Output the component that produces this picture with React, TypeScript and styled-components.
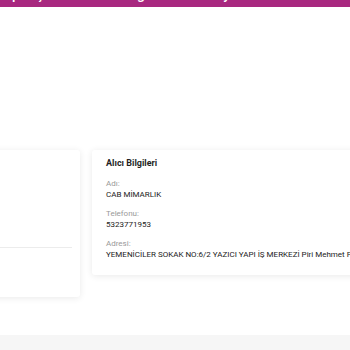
import styled, { createGlobalStyle } from 'styled-components';

const GlobalStyle = createGlobalStyle`
    html, body {
        margin: 0;
        padding: 0;
        background: #ffffff;
        font-family: Roboto, 'Noto Sans', Arial, sans-serif;
    }
`;

const Page = styled.div`
    width: 350px;
    height: 350px;
    overflow: hidden;
    display: flex;
    flex-direction: column;
`;

const TopBar = styled.div`
    height: 7px;
    flex: none;
    background-color: #a8287f;
    overflow: hidden;
    display: flex;
    align-items: flex-end;
`;

const Tab = styled.div<{ width: number }>`
    flex: none;
    width: ${(p) => p.width}px;
    text-align: right;
    color: #ffffff;
    font-size: 14px;
    font-weight: 500;
    line-height: 14px;
    margin-bottom: 6px;
    white-space: nowrap;
`;

const Content = styled.div`
    flex: 1;
    display: flex;
    flex-direction: column;
    padding-top: 143px;
`;

const CardRow = styled.div`
    display: flex;
    align-items: flex-start;
    gap: 12px;
    margin-left: -200px;
`;

const Card = styled.div<{ width: number; height: number }>`
    flex: none;
    width: ${(p) => p.width}px;
    height: ${(p) => p.height}px;
    background: #ffffff;
    border-radius: 3px;
    box-shadow: 0 1px 7px rgba(0, 0, 0, 0.09);
    box-sizing: border-box;
`;

const SideCard = styled(Card)`
    display: flex;
    flex-direction: column;
    padding: 0 8px 0 14px;
`;

const Divider = styled.div`
    margin-top: 97px;
    height: 1px;
    background: #ececec;
`;

const InfoCard = styled(Card)`
    padding: 7px 14px 0 14px;
    display: flex;
    flex-direction: column;
    white-space: nowrap;
    overflow: hidden;
`;

const Title = styled.div`
    font-size: 9px;
    font-weight: 700;
    color: #1f1f1f;
    line-height: 12px;
    margin-bottom: 9px;
`;

const Field = styled.div`
    display: flex;
    flex-direction: column;
    margin-bottom: 7px;
`;

const Label = styled.div`
    font-size: 8px;
    color: #999999;
    line-height: 11px;
`;

const Value = styled.div`
    font-size: 8px;
    color: #222222;
    line-height: 12px;
`;

const Footer = styled.div`
    height: 15px;
    flex: none;
    background: #f6f6f6;
`;

export default function App() {
    return (
        <Page>
            <GlobalStyle />
            <TopBar>
                <Tab width={43}>Sipariş</Tab>
                <Tab width={110}>Kargo</Tab>
                <Tab width={77}>Onay</Tab>
            </TopBar>
            <Content>
                <CardRow>
                    <SideCard width={280} height={147}>
                        <Divider />
                    </SideCard>
                    <InfoCard width={300} height={125}>
                        <Title>Alıcı Bilgileri</Title>
                        <Field>
                            <Label>Adı:</Label>
                            <Value>CAB MİMARLIK</Value>
                        </Field>
                        <Field>
                            <Label>Telefonu:</Label>
                            <Value>5323771953</Value>
                        </Field>
                        <Field>
                            <Label>Adresi:</Label>
                            <Value>YEMENİCİLER SOKAK NO:6/2 YAZICI YAPI İŞ MERKEZİ Piri Mehmet Paşa Mah.</Value>
                        </Field>
                    </InfoCard>
                </CardRow>
            </Content>
            <Footer />
        </Page>
    );
}
